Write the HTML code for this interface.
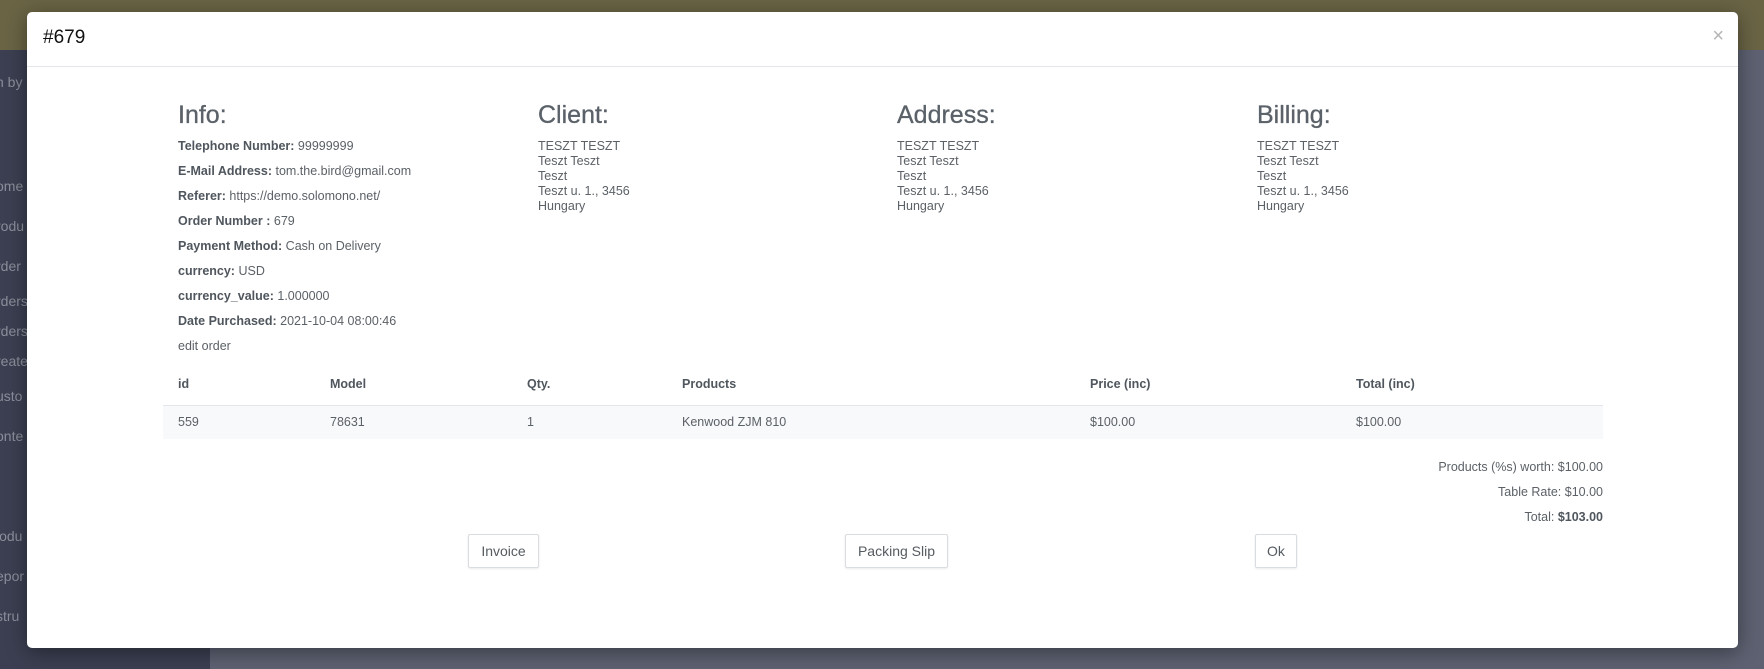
<!DOCTYPE html>
<html><head><meta charset="utf-8"><style>
*{margin:0;padding:0;box-sizing:border-box}
body{width:1764px;height:669px;overflow:hidden;position:relative;background:#5d6171;font-family:"Liberation Sans",Arial,sans-serif;color:#5b6167}
.top{position:absolute;left:0;top:0;width:1764px;height:50px;background:#6a6445}
.side{position:absolute;left:0;top:50px;width:210px;height:619px;background:#3b3f51}
.side div{position:absolute;left:-4px;color:#8a8e9a;font-size:14px}
.modal{position:absolute;left:27px;top:12px;width:1711px;height:636px;background:#fff;border-radius:5px;box-shadow:0 4px 20px rgba(0,0,0,.4)}
.hd{height:55px;border-bottom:1px solid #e3e6ea;position:relative}
.hd .t{position:absolute;left:16px;top:15px;font-size:19px;color:#111}
.hd .x{position:absolute;right:14px;top:13px;font-size:20px;color:#b5b5b5}
h2{position:absolute;font-size:25px;font-weight:normal;color:#5a6168;top:89px;-webkit-text-stroke:.3px #5a6168}
.info div{position:absolute;left:151px;font-size:12.5px;white-space:nowrap}
.addr{position:absolute;top:127px;font-size:12.5px;line-height:15px}
b{color:#4f565d}
.th,.td{position:absolute;font-size:12.5px}
.th{font-weight:bold;top:365px;color:#4f565d}
.td{top:403px}
.btn{position:absolute;top:522px;height:34px;border:1px solid #d9dce0;border-radius:2px;font-size:14px;display:flex;align-items:center;justify-content:center;color:#555b61;box-shadow:0 1px 2px rgba(0,0,0,.08)}
.tot{position:absolute;right:135px;font-size:12.5px;text-align:right}
</style></head><body>
<div class="top"></div>
<div class="side">
<div style="top:24px">h by</div><div style="top:128px">ome</div><div style="top:168px">rodu</div><div style="top:208px">rder</div><div style="top:243px">rders</div><div style="top:273px">rders</div><div style="top:303px">reate</div><div style="top:338px">usto</div><div style="top:378px">onte</div><div style="top:478px">lodu</div><div style="top:518px">epor</div><div style="top:558px">stru</div>
</div>
<div class="modal">
<div class="hd"><span class="t">#679</span><span class="x">×</span></div>
<h2 style="left:151px">Info:</h2>
<h2 style="left:511px">Client:</h2>
<h2 style="left:870px">Address:</h2>
<h2 style="left:1230px">Billing:</h2>
<div class="info">
<div style="top:127px"><b>Telephone Number:</b> 99999999</div>
<div style="top:152px"><b>E-Mail Address:</b> tom.the.bird@gmail.com</div>
<div style="top:177px"><b>Referer:</b> https://demo.solomono.net/</div>
<div style="top:202px"><b>Order Number :</b> 679</div>
<div style="top:227px"><b>Payment Method:</b> Cash on Delivery</div>
<div style="top:252px"><b>currency:</b> USD</div>
<div style="top:277px"><b>currency_value:</b> 1.000000</div>
<div style="top:302px"><b>Date Purchased:</b> 2021-10-04 08:00:46</div>
<div style="top:327px">edit order</div>
</div>
<div class="addr" style="left:511px">TESZT TESZT<br>Teszt Teszt<br>Teszt<br>Teszt u. 1., 3456<br>Hungary</div>
<div class="addr" style="left:870px">TESZT TESZT<br>Teszt Teszt<br>Teszt<br>Teszt u. 1., 3456<br>Hungary</div>
<div class="addr" style="left:1230px">TESZT TESZT<br>Teszt Teszt<br>Teszt<br>Teszt u. 1., 3456<br>Hungary</div>
<div style="position:absolute;left:136px;top:393px;width:1440px;height:34px;background:#f8f9fa;border-top:1px solid #e3e6ea"></div>
<div class="th" style="left:151px">id</div><div class="th" style="left:303px">Model</div><div class="th" style="left:500px">Qty.</div><div class="th" style="left:655px">Products</div><div class="th" style="left:1063px">Price (inc)</div><div class="th" style="left:1329px">Total (inc)</div>
<div class="td" style="left:151px">559</div><div class="td" style="left:303px">78631</div><div class="td" style="left:500px">1</div><div class="td" style="left:655px">Kenwood ZJM 810</div><div class="td" style="left:1063px">$100.00</div><div class="td" style="left:1329px">$100.00</div>
<div class="tot" style="top:448px">Products (%s) worth: $100.00</div>
<div class="tot" style="top:473px">Table Rate: $10.00</div>
<div class="tot" style="top:498px">Total: <b>$103.00</b></div>
<div class="btn" style="left:441px;width:71px">Invoice</div>
<div class="btn" style="left:818px;width:103px">Packing Slip</div>
<div class="btn" style="left:1228px;width:42px">Ok</div>
</div>
</body></html>
